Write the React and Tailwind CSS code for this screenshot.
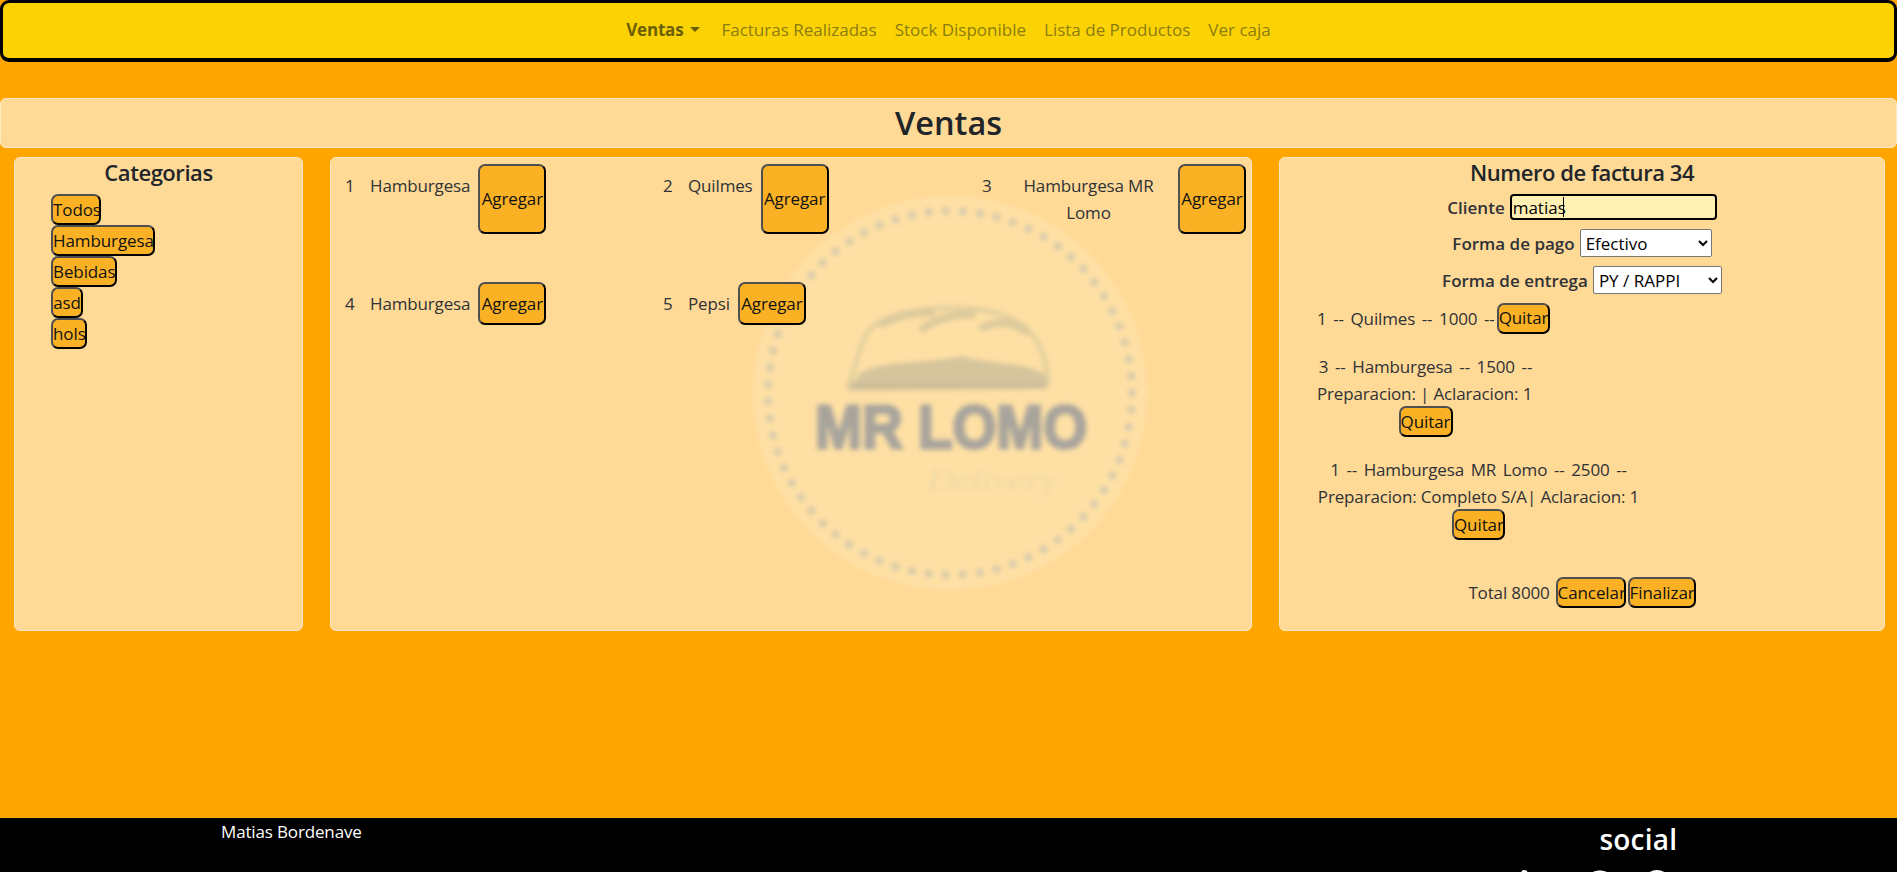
import React from "react";
import { FaLinkedinIn, FaGithub, FaWhatsapp } from "react-icons/fa";

const font = "font-['Open_Sans','Noto_Sans',sans-serif]";

// same button look everywhere in the app
function Btn({ children, className = "" }) {
  return (
    <button
      className={`bg-[#fbb124] text-[#111] text-[17px] leading-[26px] px-0 rounded-[7px] border-2 border-t-[#4f4f4f] border-l-[#4f4f4f] border-r-black border-b-black tracking-[-0.1px] whitespace-nowrap ${className}`}
    >
      {children}
    </button>
  );
}

function Logo() {
  const dots = [];
  for (let i = 0; i < 67; i++) {
    const a = (i / 67) * Math.PI * 2;
    dots.push(
      <circle key={i} cx={200 + 182 * Math.cos(a)} cy={200 + 182 * Math.sin(a)} r="4" fill="#d4c9aa" />
    );
  }
  return (
    <svg width="400" height="400" viewBox="0 0 400 400" className="absolute left-[419px] top-[35px] pointer-events-none">
      <defs>
        <filter id="soft" x="-10%" y="-10%" width="120%" height="120%">
          <feGaussianBlur stdDeviation="2.4" />
        </filter>
      </defs>
      <circle cx="200" cy="200" r="197" fill="#ffe0a4" filter="url(#soft)" />
      <g filter="url(#soft)">
        {dots}
        <path d="M98 196 L112 150 C118 132 135 124 155 120 C195 112 245 112 272 132 C290 146 297 165 298 192" fill="none" stroke="#e2cf9e" strokeWidth="5" />
        <path d="M130 132 C150 122 170 118 185 120 M170 137 C190 124 210 120 225 122 M230 136 C250 125 265 130 278 140" fill="none" stroke="#dcc99c" strokeWidth="8" />
        <path d="M110 180 C135 166 170 172 212 163 C240 172 275 168 296 182 L298 196 L98 198 Z" fill="#d6c59c" />
        <path d="M100 192 L296 192" stroke="#c8b994" strokeWidth="4" />
        <text x="201" y="255" textAnchor="middle" textLength="272" lengthAdjust="spacingAndGlyphs" fontFamily="'Liberation Sans', sans-serif" fontWeight="700" fontSize="62" fill="#a8a49c" stroke="#a8a49c" strokeWidth="3">
          MR LOMO
        </text>
        <text x="242" y="298" textAnchor="middle" textLength="130" lengthAdjust="spacingAndGlyphs" fontFamily="'Liberation Serif', serif" fontStyle="italic" fontSize="32" fill="#ecd8a6">
          Delivery
        </text>
      </g>
    </svg>
  );
}

function Product({ id, name, tall, nameClass = "", style = "" }) {
  return (
    <div className={`flex items-start ${style}`}>
      <span className="w-[39px] shrink-0 pl-[14px] mt-[8px]">{id}</span>
      <span className={`mt-[8px] mr-[8px] text-center ${nameClass}`}>{name}</span>
      <Btn className={`w-[68px] shrink-0 ${tall ? "h-[70px]" : "h-[43px]"}`}>Agregar</Btn>
    </div>
  );
}

export default function App() {
  return (
    <div className={`h-screen overflow-hidden bg-[#ffa500] flex flex-col text-[17px] leading-[27px] tracking-[-0.15px] text-[#2f3237] ${font}`}>
      <nav className="h-[62px] shrink-0 pb-[2px] bg-[#fbd305] border-x-[3px] border-t-[3px] border-b-[4px] border-black rounded-[9px] flex items-center justify-center gap-[18px] text-[#8c7c10] tracking-normal">
        <a className="font-bold text-[#6b5e06] flex items-center gap-[7px] mr-[3px] tracking-[-0.2px]">
          Ventas
          <span className="w-0 h-0 border-x-[5px] border-x-transparent border-t-[5px] border-t-[#6b5e06]" />
        </a>
        <a>Facturas Realizadas</a>
        <a>Stock Disponible</a>
        <a>Lista de Productos</a>
        <a>Ver caja</a>
      </nav>

      <div className="mt-[36px] h-[50px] shrink-0 bg-[#ffd996] border border-[#ffe9c4] rounded-[6px] flex items-center justify-center">
        <h2 className="text-[32.5px] leading-[38px] font-semibold text-[#212529] tracking-normal">Ventas</h2>
      </div>

      <div className="mt-[9px] h-[474px] shrink-0 flex gap-[27px] pl-[14px] pr-[12px] items-stretch">
        <section className="w-[289px] bg-[#ffd996] border border-[#ffe9c4] rounded-[6px]">
          <h5 className="text-center text-[22px] leading-[26px] font-semibold text-[#212529] tracking-[-0.45px] mt-px mb-[9px]">Categorias</h5>
          <div className="flex flex-col items-start pl-[36px]">
            <Btn className="h-[31px] w-[50px]">Todos</Btn>
            <Btn className="h-[31px] w-[104px]">Hamburgesa</Btn>
            <Btn className="h-[31px] w-[66px]">Bebidas</Btn>
            <Btn className="h-[31px] w-[32px]">asd</Btn>
            <Btn className="h-[31px] w-[36px]">hols</Btn>
          </div>
        </section>

        <section className="relative w-[922px] bg-[#ffd996] border border-[#ffe9c4] rounded-[6px]">
          <Logo />
          <div className="relative grid grid-cols-[318px_319px_1fr] pt-[6px]">
            <Product id="1" name="Hamburgesa" tall />
            <Product id="2" name="Quilmes" tall />
            <Product id="3" name="Hamburgesa MR Lomo" tall nameClass="w-[163px]" />
            <Product id="4" name="Hamburgesa" style="mt-[48px]" />
            <Product id="5" name="Pepsi" style="mt-[48px]" />
          </div>
        </section>

        <section className="w-[606px] bg-[#ffd996] border border-[#ffe9c4] rounded-[6px]">
          <h5 className="text-center text-[22px] leading-[26px] font-semibold text-[#212529] tracking-[-0.45px] mt-px mb-[9px]">Numero de factura 34</h5>
          <div className="flex flex-col items-center font-semibold tracking-normal">
            <div className="flex items-center gap-[5px] h-[26px]">
              <span>Cliente</span>
              <div className="relative">
                <input defaultValue="matias" className="block w-[207px] h-[26px] px-[1px] bg-[#fff0b3] border-2 border-black rounded-[4px] font-normal text-black outline-none" />
                <span className="absolute left-[53px] top-[3px] w-px h-[20px] bg-black" />
              </div>
            </div>
            <div className="flex items-center gap-[5px] h-[28px] mt-[9px]">
              <span>Forma de pago</span>
              <select className="w-[132px] h-[28px] bg-white border border-[#767676] rounded-[2px] font-normal text-black pl-px"><option>Efectivo</option></select>
            </div>
            <div className="flex items-center gap-[5px] h-[28px] mt-[9px]">
              <span>Forma de entrega</span>
              <select className="w-[129px] h-[28px] bg-white border border-[#767676] rounded-[2px] font-normal text-black pl-px"><option>PY / RAPPI</option></select>
            </div>
          </div>
          <div className="ml-[37px] mt-[9px]">
            <div className="flex items-center h-[30px] [word-spacing:2.4px]">
              1 -- Quilmes -- 1000 --<Btn className="w-[53px] h-[31px] ml-[2px] [word-spacing:0]">Quitar</Btn>
            </div>
            <div className="w-[217px] mt-[20px] text-center">
              <p className="[word-spacing:2.4px] whitespace-nowrap">3 -- Hamburgesa -- 1500 --</p>
              <p className="text-left whitespace-nowrap">Preparacion: | Aclaracion: 1</p>
              <Btn className="block mx-auto w-[54px] h-[31px] -mt-px">Quitar</Btn>
            </div>
            <div className="w-[323px] mt-[19px] text-center">
              <p className="[word-spacing:2.4px] whitespace-nowrap">1 -- Hamburgesa MR Lomo -- 2500 --</p>
              <p className="whitespace-nowrap">Preparacion: Completo S/A| Aclaracion: 1</p>
              <Btn className="block mx-auto w-[53px] h-[31px] -mt-px">Quitar</Btn>
            </div>
          </div>
          <div className="flex items-center justify-center mt-[37px]">
            <span className="mr-[6px]">Total 8000</span>
            <Btn className="w-[70px] h-[31px] mr-[2px]">Cancelar</Btn>
            <Btn className="w-[68px] h-[31px]">Finalizar</Btn>
          </div>
        </section>
      </div>

      <footer className="mt-auto h-[54px] shrink-0 bg-black text-white grid grid-cols-2 overflow-hidden">
        <div className="pl-[221px]"><p>Matias Bordenave</p></div>
        <div>
          <p className="pl-[651px] text-[28px] leading-[42px] font-semibold tracking-[0.2px]">social</p>
          <div className="pl-[570px] mt-[10px] flex items-start text-white">
            <FaLinkedinIn size={32} />
            <FaGithub size={32} className="ml-[33px]" />
            <FaWhatsapp size={32} className="ml-[25px] -mt-[2px]" />
          </div>
        </div>
      </footer>
    </div>
  );
}
